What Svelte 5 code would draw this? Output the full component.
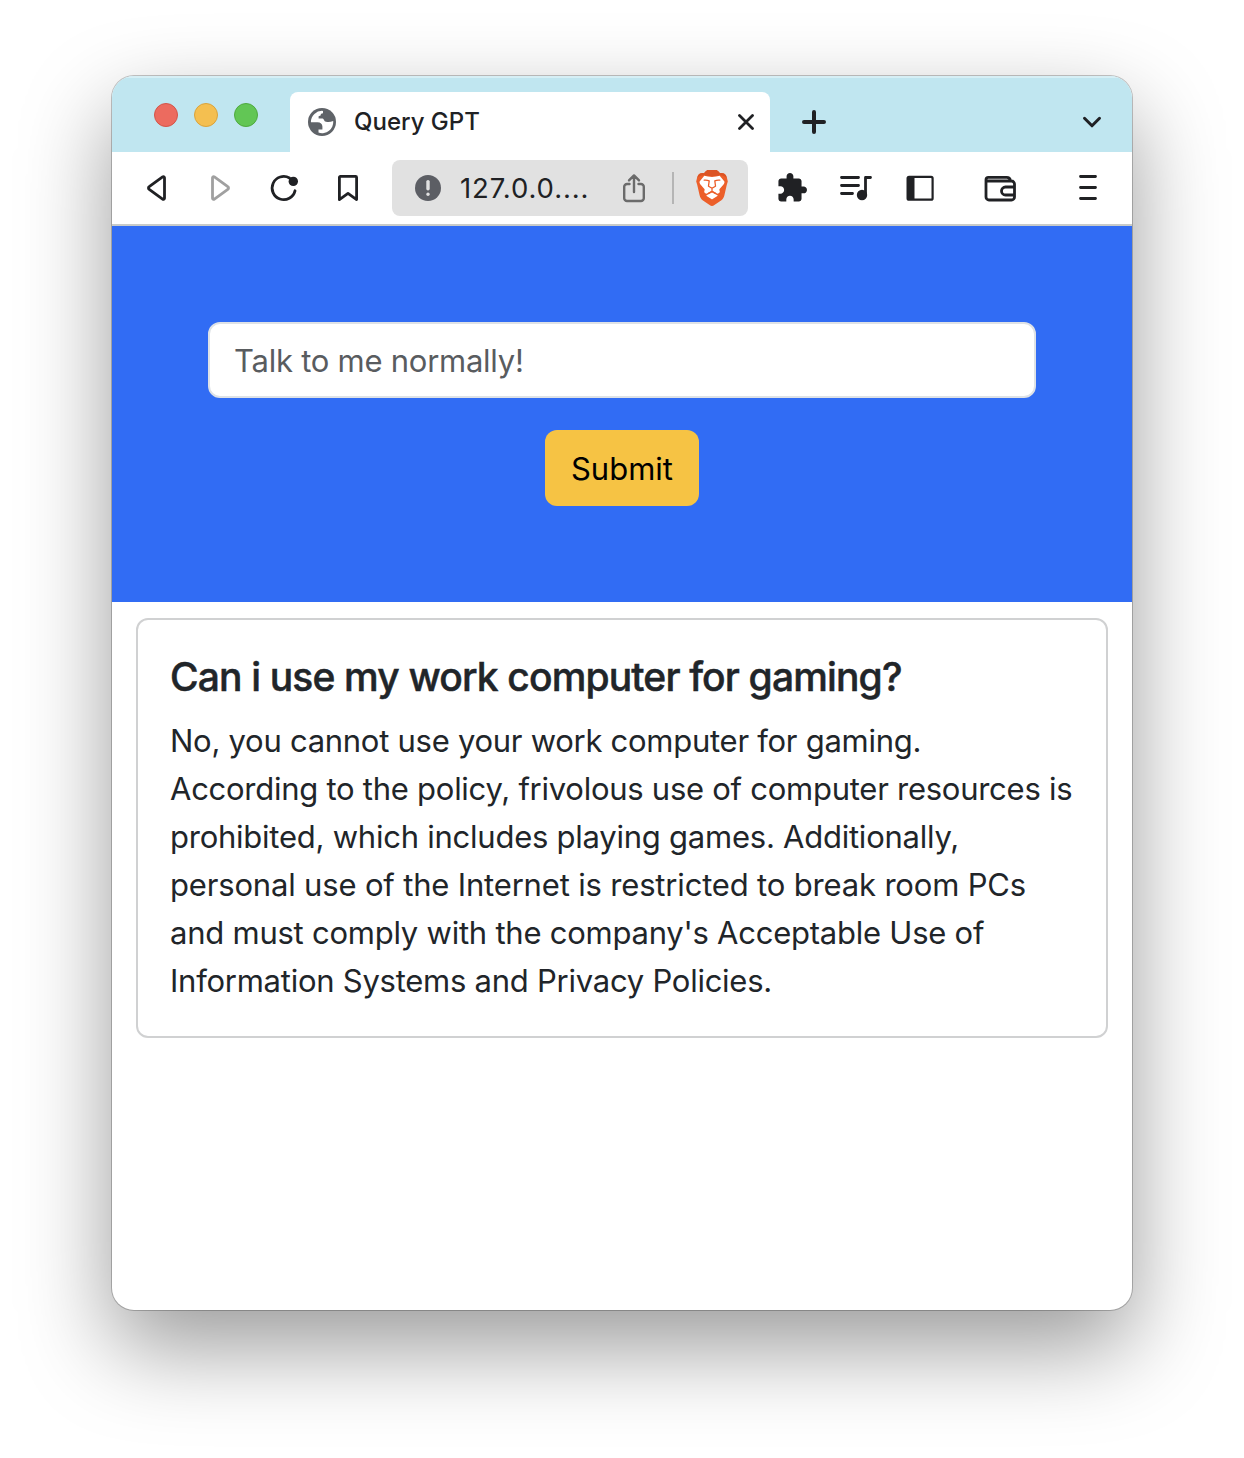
<script>
  const question = 'Can i use my work computer for gaming?';
  // Each line carries its own tracking, in pixels.
  const answer = [
    { text: 'No, you cannot use your work computer for gaming.', tracking: -0.27 },
    { text: 'According to the policy, frivolous use of computer resources is', tracking: -0.26 },
    { text: 'prohibited, which includes playing games. Additionally,', tracking: -0.24 },
    { text: 'personal use of the Internet is restricted to break room PCs', tracking: -0.17 },
    { text: "and must comply with the company's Acceptable Use of", tracking: -0.24 },
    { text: 'Information Systems and Privacy Policies.', tracking: -0.25 }
  ];
</script>

<div class="desktop">
  <div class="window">
    <header class="tabs">
      <div class="lights">
        <i class="red"></i><i class="amber"></i><i class="green"></i>
      </div>
      <div class="tab">
        <svg class="globe" viewBox="0 0 28 28">
          <circle cx="14" cy="14" r="14" fill="#5f6368" />
          <path fill="#fff" d="M15 2.900V5.200C13.500 5.200 12.600 6 12.600 7.400L10.600 8.200V10.400H14.600C16 10.600 15.800 13.200 18 13.800C20.600 14.400 22.600 14 25.200 13A11.200 11.200 0 0 1 10.500 24.600V21.500H14.400V18.600C14.400 16 12.500 14.300 9.500 14.300H2.900A11.200 11.200 0 0 1 15 2.900Z" />
        </svg>
        <span class="tab-title">Query GPT</span>
        <svg class="close" viewBox="0 0 16 16"><path d="M1.500 1.500l13 13M14.500 1.500l-13 13" /></svg>
      </div>
      <svg class="plus" viewBox="0 0 24 24"><path d="M12 2v20M2 12h20" /></svg>
      <svg class="chevron" viewBox="0 0 20 12"><path d="M2.500 2.300L10 9.800l7.500-7.500" /></svg>
    </header>

    <nav class="toolbar">
      <div class="nav">
        <svg viewBox="0 0 32 32"><path d="M22.600 4.900 9.200 14.600a1.700 1.700 0 0 0 0 2.800l13.400 9.700c.8.600 1.900 0 1.900-.9V5.800c0-1-1.100-1.500-1.900-.9z" /></svg>
        <svg class="dim" viewBox="0 0 32 32"><path d="M10.400 4.900 23.800 14.600a1.700 1.700 0 0 1 0 2.800l-13.400 9.700c-.8.600-1.900 0-1.900-.9V5.800c0-1 1.100-1.500 1.900-.9z" /></svg>
        <svg viewBox="0 0 32 32"><path d="M21.500 6A11.600 11.600 0 1 0 27 18.800" /><circle class="fill" cx="25.300" cy="9.400" r="4.700" /></svg>
        <svg viewBox="0 0 32 32"><path d="M7.400 5.400a1 1 0 0 1 1-1h15.200a1 1 0 0 1 1 1v22.200L16 21.400l-8.600 6.200z" /></svg>
      </div>

      <div class="url">
        <svg class="info" viewBox="0 0 26 26">
          <circle cx="13" cy="13" r="13" />
          <path d="M13 6.600v7.200" /><path d="M13 19.100v.1" />
        </svg>
        <span class="address">127.0.0....</span>
        <svg class="share" viewBox="0 0 32 32"><path d="M11.500 12H9a2.800 2.800 0 0 0-2.800 2.800v11.400A2.800 2.800 0 0 0 9 29h14a2.800 2.800 0 0 0 2.800-2.800V14.800A2.800 2.800 0 0 0 23 12h-2.500M16 20V4.200M11 8.400l5-5 5 5" /></svg>
        <span class="rule"></span>
        <svg class="lion" viewBox="0 0 32 36">
          <path fill="#ec5f2a" d="M9.500 1.500 11.400 0h9.200l1.900 1.600 1.500 1.700c2.400-.6 4.400.2 6 2.200L31 8l.8 3.500-1 3.300-2.400 10.400c-.5 2-1.400 3.600-3 5L18.400 35c-1.600 1.300-3.200 1.300-4.800 0l-7-4.800c-1.600-1.400-2.500-3-3-5L1.200 14.800l-1-3.300L1 8l1-2.500c1.600-2 3.600-2.800 6-2.200z" />
          <path fill="#dc5424" d="M9.500 1.500 11.400 0h9.200l1.900 1.600 1.500 1.700c2.400-.6 4.400.2 6 2.200L31 8c-3-2.500-5.500-3.300-8-2.600L16 6.200 9 5.400C6.500 4.700 4 5.500 1 8l1-2.500c1.600-2 3.600-2.800 6-2.200z" />
          <path fill="#fff" d="M8.300 5.700 12 6.500c2.700.5 5.300.5 8 0l3.700-.8 4.700 5.900c.3.900-.2 2.200-1.100 3.200l-3.700 4.200c-.5.700-.2 1.400.1 2.100.4 1.300-.7 2.300-2 2.700-1.500-.3-2.800-1.800-4.500-2.200h-2.400c-1.700.4-3 1.900-4.500 2.200-1.300-.4-2.400-1.400-2-2.700.3-.7.600-1.400.1-2.100l-3.700-4.200c-.9-1-1.400-2.300-1.100-3.200z" />
          <path fill="#fff" d="m16 22.400 5.400 2.900c.4.300.3.600 0 .8L16.600 29c-.4.300-.8.300-1.200 0l-4.800-2.900c-.3-.2-.4-.5 0-.8z" />
          <path fill="none" stroke="#ec5f2a" stroke-width="1.300" stroke-linecap="round" stroke-linejoin="round" d="M8.200 10.200c1.900-.3 3.500 0 5 .7l-.7 5M23.800 10.200c-1.900-.3-3.500 0-5 .7l.7 5M12.500 16.200 16 18.200l3.500-2M16 18.200v3M12.400 23.400l3.600-2.200 3.600 2.200" />
        </svg>
      </div>

      <div class="tools">
        <svg viewBox="0 0 32 32"><path class="solid" transform="translate(-.3 -.4) scale(1.360)" d="M20.500 11H19V7c0-1.100-.9-2-2-2h-4V3.500C13 2.120 11.880 1 10.500 1S8 2.120 8 3.500V5H4c-1.100 0-1.990.9-1.990 2v3.800H3.500c1.490 0 2.700 1.210 2.700 2.700s-1.210 2.700-2.700 2.700H2V20c0 1.100.9 2 2 2h3.800v-1.500c0-1.490 1.210-2.700 2.700-2.700 1.490 0 2.700 1.210 2.700 2.700V22H17c1.100 0 2-.9 2-2v-4h1.500c1.380 0 2.500-1.120 2.500-2.500S21.880 11 20.500 11z" /></svg>
        <svg viewBox="0 0 32 32"><path d="M1.500 5.500h17M1.500 13.500h17M1.500 21.500h11M30.500 5.500h-5v17" /><circle class="fill" cx="22" cy="23" r="5.200" /></svg>
        <svg viewBox="0 0 32 32"><rect class="thin" x="3.600" y="4.900" width="25" height="22.800" rx="1.500" /><path class="solid" d="M3 5h7.500v22.500H3z" /></svg>
        <svg class="wallet" viewBox="0 0 32 32"><path d="M2 8v17a3 3 0 0 0 3 3h22.500a3 3 0 0 0 3-3V12a3 3 0 0 0-3-3H3.500A1.500 1.500 0 0 1 2 7.500v0A2.300 2.300 0 0 1 4.300 5.300h18.500c2 0 3.200 1 3.600 3M30.500 15H21.500a4 4 0 0 0 0 8h9" /></svg>
        <svg class="menu" viewBox="0 0 32 32"><path d="M8.500 4.500h15M8.500 15.500h15M8.500 26.500h15" /></svg>
      </div>
    </nav>

    <section class="ask">
      <input class="prompt" type="text" placeholder="Talk to me normally!" />
      <button class="submit">Submit</button>
    </section>

    <article class="card">
      <h5>{question}</h5>
      <p>
        {#each answer as line}
          <span style="letter-spacing: {line.tracking}px">{line.text}</span>
        {/each}
      </p>
    </article>
  </div>
</div>

<style>
  :global(body) {
    background: #fff;
  }
  .desktop {
    box-sizing: border-box;
    height: 1458px;
    padding: 76px 112px 148px;
    overflow: hidden;
    font-family: Inter, 'Liberation Sans', sans-serif;
    color: #212529;
  }
  .window {
    height: 1234px;
    border-radius: 22px;
    overflow: hidden;
    background: #fff;
    box-shadow: 0 0 0 1px rgba(0, 0, 0, 0.22), 0 37px 90px rgba(0, 0, 0, 0.4);
  }
  svg {
    display: block;
    flex: none;
    fill: none;
    stroke: #202124;
    stroke-width: 2.8;
    stroke-linecap: round;
    stroke-linejoin: round;
  }
  .tabs {
    box-sizing: border-box;
    display: flex;
    align-items: flex-end;
    height: 76px;
    padding: 0 30px 0 42px;
    background: #c0e6f0;
    box-shadow: inset 0 2px 0 #d6eff5;
  }
  .lights {
    display: flex;
    gap: 16px;
    width: 136px;
    padding-bottom: 25px;
  }
  .lights i {
    box-sizing: border-box;
    width: 24px;
    height: 24px;
    border-radius: 50%;
    border: 1px solid;
  }
  .lights .red {
    background: #ec6b5f;
    border-color: #d35549;
  }
  .lights .amber {
    background: #f4bf50;
    border-color: #d9a33c;
  }
  .lights .green {
    background: #62c655;
    border-color: #4fa93f;
  }
  .tab {
    box-sizing: border-box;
    display: flex;
    align-items: center;
    width: 480px;
    height: 60px;
    padding: 0 16px 0 18px;
    border-radius: 8px 8px 0 0;
    background: #fff;
  }
  .globe {
    width: 28px;
    height: 28px;
    stroke: none;
  }
  .tab-title {
    flex: 1;
    margin-left: 18px;
    padding-bottom: 2px;
    font-size: 24px;
    font-weight: 500;
    color: #202124;
  }
  .close {
    width: 16px;
    height: 16px;
  }
  .plus {
    width: 24px;
    height: 24px;
    margin: 0 auto 18px 32px;
    stroke-width: 4;
  }
  .chevron {
    width: 20px;
    height: 12px;
    margin-bottom: 24px;
    stroke-width: 3;
  }
  .toolbar {
    box-sizing: border-box;
    display: flex;
    align-items: center;
    gap: 28px;
    height: 74px;
    padding: 0 28px;
    border-bottom: 2px solid #c8cbc9;
  }
  .nav,
  .tools {
    display: flex;
    gap: 32px;
  }
  .nav svg,
  .tools svg,
  .share {
    width: 32px;
    height: 32px;
  }
  .nav .dim {
    stroke: #a0a0a0;
  }
  .fill,
  .solid {
    fill: #202124;
    stroke: none;
  }
  .thin {
    stroke-width: 2.2;
  }
  .tools .wallet {
    margin-left: 16px;
  }
  .tools .menu {
    margin-left: 24px;
  }
  .url {
    box-sizing: border-box;
    display: flex;
    align-items: center;
    flex: 1;
    height: 56px;
    padding: 0 20px 0 23px;
    border-radius: 8px;
    background: #e1e1e1;
  }
  .info {
    width: 26px;
    height: 26px;
    stroke: #e1e1e1;
    stroke-width: 3.4;
  }
  .info circle {
    fill: #5c5e64;
    stroke: none;
  }
  .address {
    width: 138px;
    margin-left: 19px;
    font-size: 27.5px;
    letter-spacing: 0.9px;
    white-space: nowrap;
    color: #202124;
  }
  .share {
    margin-left: 20px;
    stroke: #6b6b6b;
    stroke-width: 2.4;
  }
  .rule {
    width: 2px;
    height: 32px;
    margin: 0 22px;
    background: #b5b5b5;
  }
  .lion {
    width: 32px;
    height: 36px;
    stroke: none;
  }
  .ask {
    box-sizing: border-box;
    display: flex;
    flex-direction: column;
    align-items: center;
    gap: 32px;
    height: 376px;
    padding: 96px;
    background: #316cf4;
  }
  .prompt,
  .submit {
    box-sizing: border-box;
    height: 76px;
    margin: 0;
    border-radius: 12px;
    font: 400 31px Inter, 'Liberation Sans', sans-serif;
  }
  .prompt {
    width: 100%;
    padding: 1px 24px 0;
    border: 2px solid #dee2e6;
    background: #fff;
    letter-spacing: -0.25px;
  }
  .prompt::placeholder {
    color: #595c5f;
    opacity: 1;
  }
  .submit {
    width: 154px;
    padding: 0;
    border: 0;
    background: #f6c344;
    color: #000;
  }
  .card {
    box-sizing: border-box;
    height: 420px;
    margin: 16px 24px 0;
    padding: 33px 32px 31px;
    border: 2px solid #d0d1d2;
    border-radius: 12px;
  }
  h5 {
    margin: 0 0 16px;
    font-size: 39px;
    font-weight: 500;
    line-height: 48px;
    letter-spacing: -0.85px;
    white-space: nowrap;
    -webkit-text-stroke: 0.5px #212529;
  }
  p {
    margin: 0;
    font-size: 31px;
    line-height: 48px;
  }
  p span {
    display: block;
    white-space: nowrap;
  }
</style>
